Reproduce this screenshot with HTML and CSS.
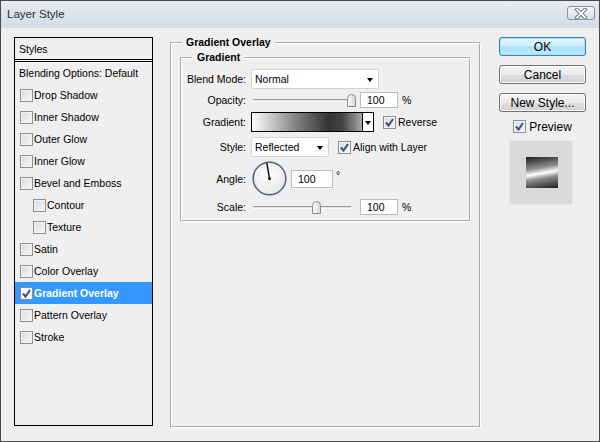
FILE: index.html
```html
<!DOCTYPE html>
<html>
<head>
<meta charset="utf-8">
<title>Layer Style</title>
<link rel="stylesheet" href="styles.css">
</head>
<body>
<div class="window">
  <div class="titlebar">
    <span class="title">Layer Style</span>
    <span class="close">
      <svg width="14" height="11" viewBox="0 0 14 11">
        <path d="M3 1.5 L11 9.5 M11 1.5 L3 9.5" stroke="#5a6679" stroke-width="3.6" stroke-linecap="square" fill="none"/>
        <path d="M3 1.5 L11 9.5 M11 1.5 L3 9.5" stroke="#ffffff" stroke-width="1.8" stroke-linecap="square" fill="none"/>
      </svg>
    </span>
  </div>
  <div class="content">
    <div class="styles-panel">
      <div class="sp-head">Styles</div>
      <div class="sp-blend">Blending Options: Default</div>
      <div class="item"><span class="cb"></span>Drop Shadow</div>
      <div class="item"><span class="cb"></span>Inner Shadow</div>
      <div class="item"><span class="cb"></span>Outer Glow</div>
      <div class="item"><span class="cb"></span>Inner Glow</div>
      <div class="item"><span class="cb"></span>Bevel and Emboss</div>
      <div class="item sub"><span class="cb"></span>Contour</div>
      <div class="item sub"><span class="cb"></span>Texture</div>
      <div class="item"><span class="cb"></span>Satin</div>
      <div class="item"><span class="cb"></span>Color Overlay</div>
      <div class="item selected"><span class="cb on white"><svg width="11" height="11" viewBox="0 0 11 11"><path d="M2 5.5 L4.5 8.5 L9 2" stroke="#3b4f82" stroke-width="2" fill="none"/></svg></span>Gradient Overlay</div>
      <div class="item"><span class="cb"></span>Pattern Overlay</div>
      <div class="item"><span class="cb"></span>Stroke</div>
    </div>

    <fieldset class="group outer">
      <legend>Gradient Overlay</legend>
      <fieldset class="group inner">
        <legend>Gradient</legend>

        <div class="row r-blend">
          <span class="lbl">Blend Mode:</span>
          <div class="select sel-blend"><span>Normal</span><span class="arrow"></span></div>
        </div>

        <div class="row r-opacity">
          <span class="lbl">Opacity:</span>
          <div class="slider">
            <span class="track"></span>
            <svg class="thumb" style="left:96px" width="9" height="13" viewBox="0 0 9 13"><defs><linearGradient id="tg1" x1="0" y1="0" x2="1" y2="0"><stop offset="0" stop-color="#ffffff"/><stop offset="1" stop-color="#d6d6d6"/></linearGradient></defs><path d="M0.5 12.5 V4.5 Q0.5 0.5 4.5 0.5 Q8.5 0.5 8.5 4.5 V12.5 Z" fill="url(#tg1)" stroke="#8a8a8a"/></svg>
          </div>
          <div class="num">100</div>
          <span class="unit">%</span>
        </div>

        <div class="row r-gradient">
          <span class="lbl">Gradient:</span>
          <div class="swatch"></div>
          <div class="swatch-arrow"><span class="arrow"></span></div>
          <span class="cb on ml"><svg width="11" height="11" viewBox="0 0 11 11"><path d="M2 5.5 L4.5 8.5 L9 2" stroke="#3b4f82" stroke-width="2" fill="none"/></svg></span>
          <span class="cb-text">Reverse</span>
        </div>

        <div class="row r-style">
          <span class="lbl">Style:</span>
          <div class="select sel-style"><span>Reflected</span><span class="arrow"></span></div>
          <span class="cb on ml"><svg width="11" height="11" viewBox="0 0 11 11"><path d="M2 5.5 L4.5 8.5 L9 2" stroke="#3b4f82" stroke-width="2" fill="none"/></svg></span>
          <span class="cb-text">Align with Layer</span>
        </div>

        <div class="row r-angle">
          <span class="lbl">Angle:</span>
          <svg class="dial" width="35" height="35" viewBox="0 0 35 35">
            <defs>
              <radialGradient id="dg" cx="0.45" cy="0.4" r="0.65">
                <stop offset="0" stop-color="#ffffff"/>
                <stop offset="1" stop-color="#e6e6e6"/>
              </radialGradient>
            </defs>
            <circle cx="17.5" cy="17.5" r="16.3" fill="url(#dg)" stroke="#52657f" stroke-width="1.5"/>
            <line x1="17.5" y1="17.5" x2="14.8" y2="2" stroke="#000" stroke-width="1.4"/>
            <circle cx="17.5" cy="17.5" r="1.5" fill="#000"/>
          </svg>
          <div class="num angle">100</div>
          <span class="deg">°</span>
        </div>

        <div class="row r-scale">
          <span class="lbl">Scale:</span>
          <div class="slider">
            <span class="track"></span>
            <svg class="thumb" style="left:61px" width="9" height="13" viewBox="0 0 9 13"><defs><linearGradient id="tg2" x1="0" y1="0" x2="1" y2="0"><stop offset="0" stop-color="#ffffff"/><stop offset="1" stop-color="#d6d6d6"/></linearGradient></defs><path d="M0.5 12.5 V4.5 Q0.5 0.5 4.5 0.5 Q8.5 0.5 8.5 4.5 V12.5 Z" fill="url(#tg2)" stroke="#8a8a8a"/></svg>
          </div>
          <div class="num">100</div>
          <span class="unit">%</span>
        </div>
      </fieldset>
    </fieldset>

    <div class="actions">
      <button class="btn default">OK</button>
      <button class="btn">Cancel</button>
      <button class="btn">New Style...</button>
      <div class="preview-row">
        <span class="cb on"><svg width="11" height="11" viewBox="0 0 11 11"><path d="M2 5.5 L4.5 8.5 L9 2" stroke="#3b4f82" stroke-width="2" fill="none"/></svg></span>
        <span>Preview</span>
      </div>
      <div class="preview-box"><div class="preview-swatch"></div></div>
    </div>
  </div>
</div>
</body>
</html>
```

FILE: styles.css
```css
* { box-sizing: border-box; }
html, body { margin: 0; padding: 0; }
body {
  font-family: "Liberation Sans", Arial, sans-serif;
  font-size: 10.5px;
  color: #000;
  background: #efefef;
}
.window {
  width: 600px;
  height: 442px;
  border: 1px solid #4a4a4a;
  background: #efefef;
  display: flex;
  flex-direction: column;
}
.titlebar {
  height: 27px;
  flex: none;
  display: flex;
  align-items: center;
  justify-content: space-between;
  padding: 0 4px 0 6px;
  background: linear-gradient(#e6ecf2, #d3dce7);
}
.title {
  font-size: 11.5px;
  color: #2b2b2b;
  margin-top: -1px;
}
.close {
  width: 28px;
  height: 14px;
  margin-top: -3px;
  border: 1px solid #8593a4;
  border-radius: 3px;
  background: linear-gradient(#f4f7fa, #d6dee8);
  display: flex;
  align-items: center;
  justify-content: center;
}
.content {
  flex: 1;
  display: flex;
  align-items: flex-start;
  padding: 8px 0 0 13px;
}

/* left styles list */
.styles-panel {
  width: 139px;
  height: 389px;
  margin-top: 1px;
  margin-right: 17px;
  border: 1px solid #000;
  flex: none;
}
.sp-head {
  height: 24px;
  border-bottom: 3px double #000;
  padding-left: 4px;
  display: flex;
  align-items: center;
}
.sp-blend {
  height: 22px;
  padding-left: 4px;
  display: flex;
  align-items: center;
}
.item {
  height: 22px;
  padding-left: 5px;
  display: flex;
  align-items: center;
}
.item.sub { padding-left: 18px; }
.item .cb { margin-right: 1px; }
.item.selected {
  background: #3399ff;
  color: #fff;
  font-weight: bold;
}

/* checkbox */
.cb {
  width: 13px;
  height: 13px;
  flex: none;
  border: 1px solid #8f8f8f;
  background: linear-gradient(135deg, #d9dbde, #f7f7f8);
  box-shadow: inset 0 0 0 1px #f4f4f4;
  display: inline-flex;
  align-items: center;
  justify-content: center;
}
.cb.white { background: #fafafa; }
.cb.ml { margin-left: 9px; }
.cb-text { margin-left: 2px; }

/* group boxes */
.group {
  margin: 0;
  border: 2px groove #ffffff;
  min-inline-size: 0;
}
.group legend {
  font-weight: bold;
  line-height: 13px;
}
.outer {
  width: 311px;
  height: 392px;
  flex: none;
  padding: 2px 8px 0 8px;
}
.outer > legend {
  margin-left: 2px;
  padding: 0 4px;
}
.inner {
  width: 291px;
  padding: 0 0 5px 0;
}
.inner > legend {
  margin-left: 10px;
  padding: 0 5px;
}

/* rows */
.row {
  display: flex;
  align-items: center;
}
.lbl {
  width: 64px;
  flex: none;
  text-align: right;
  margin-right: 5px;
}
.r-blend { height: 20px; margin-top: 5px; }
.r-opacity { height: 16px; margin-top: 3px; }
.r-gradient { height: 20px; margin-top: 4px; }
.r-style { height: 20px; margin-top: 5px; }
.r-angle { height: 35px; margin-top: 4px; }
.r-scale { height: 16px; margin-top: 3px; }

.select {
  height: 20px;
  background: #fff;
  border: 1px solid #d4d4d4;
  border-radius: 2px;
  display: flex;
  align-items: center;
  justify-content: space-between;
  padding: 0 5px 0 3px;
}
.sel-blend { width: 128px; }
.sel-style { width: 78px; }
.arrow {
  width: 0;
  height: 0;
  border-left: 3.5px solid transparent;
  border-right: 3.5px solid transparent;
  border-top: 4px solid #000;
  margin-top: 2px;
}

.slider {
  position: relative;
  width: 109px;
  height: 16px;
  flex: none;
}
.track {
  position: absolute;
  left: 2px;
  top: 7px;
  width: 98px;
  height: 3px;
  border-top: 1px solid #9c9c9c;
  border-bottom: 1px solid #ffffff;
  background: #e2e2e2;
}
.thumb {
  position: absolute;
  top: 2px;
}

.num {
  width: 38px;
  height: 16px;
  flex: none;
  background: #fff;
  border: 1px solid #b9bcc2;
  padding-left: 6px;
  display: flex;
  align-items: center;
}
.unit { margin-left: 4px; }

.swatch {
  width: 112px;
  height: 20px;
  border: 1px solid #000;
  background: linear-gradient(to right, #ffffff 0%, #7c7c7c 42%, #333333 70%, #444444 82%, #aaaaaa 100%);
}
.swatch-arrow {
  width: 11px;
  height: 20px;
  border: 1px solid #000;
  border-left: none;
  background: #fff;
  display: flex;
  align-items: center;
  justify-content: center;
}

.dial { margin-left: 1px; flex: none; }
.num.angle {
  width: 42px;
  height: 18px;
  margin-left: 4px;
}
.deg {
  margin-left: 3px;
  align-self: flex-start;
  margin-top: 8px;
}

/* right actions */
.actions {
  width: 87px;
  flex: none;
  margin-left: 18px;
  margin-top: 1px;
  display: flex;
  flex-direction: column;
}
.btn {
  height: 19px;
  margin: 0 0 9px 0;
  padding: 0;
  font-family: "Liberation Sans", Arial, sans-serif;
  font-size: 12px;
  color: #000;
  border: 1px solid #707070;
  border-radius: 3px;
  background: linear-gradient(#f3f3f3 0%, #ebebeb 50%, #dedede 51%, #d2d2d2 100%);
  box-shadow: inset 0 0 0 1px #fbfbfb;
}
.btn.default {
  border-color: #3c7fb1;
  background: linear-gradient(#e6f6fd 0%, #cdeefc 48%, #a8dff8 52%, #bfe9fb 100%);
  box-shadow: inset 0 0 0 1px #9fe0fa;
}
.preview-row {
  height: 13px;
  margin-top: -1px;
  display: flex;
  align-items: center;
  justify-content: center;
  gap: 3px;
  font-size: 12px;
}
.preview-box {
  width: 64px;
  height: 65px;
  margin: 7px 0 0 10px;
  background: #dadada;
  border: 1px solid #e8e8e8;
  display: flex;
  align-items: center;
  justify-content: center;
}
.preview-swatch {
  width: 32px;
  height: 31px;
  margin-left: 1px;
  background: linear-gradient(170deg, #1c1c1c 0%, #8e8e8e 36%, #ffffff 52%, #8e8e8e 66%, #1c1c1c 100%);
}
```
